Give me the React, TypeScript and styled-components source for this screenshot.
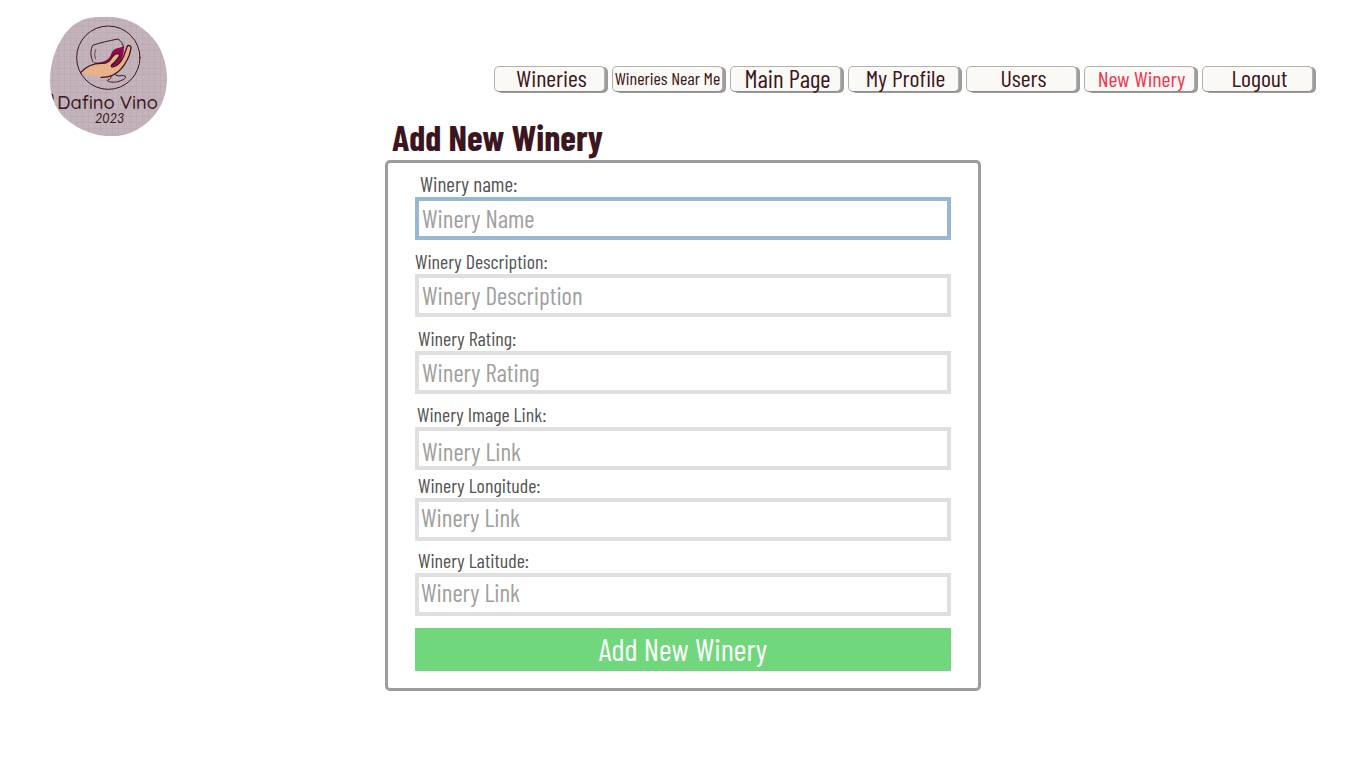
import React from "react";
import styled, { createGlobalStyle } from "styled-components";

const GlobalStyle = createGlobalStyle`
  *, *::before, *::after { box-sizing: border-box; }
  body {
    margin: 0;
    background: #ffffff;
    color: #3b1620;
    font-family: "Barlow Condensed", "Liberation Sans Narrow", "Roboto Condensed", "Liberation Sans", sans-serif;
  }
`;

const Page = styled.div`
  display: grid;
  grid-template-columns: auto 1fr;
  row-gap: 28px;
  padding: 16px 50px;
`;

const LogoLink = styled.a`
  grid-column: 1;
  grid-row: 1 / span 2;
  align-self: start;
  display: block;
  line-height: 0;
`;

const Nav = styled.nav`
  grid-column: 2;
  grid-row: 1;
  display: flex;
  justify-content: flex-end;
  gap: 7px;
  padding: 50px 3px 0 0;
`;

const NavButton = styled.button<{ $size: number; $active?: boolean }>`
  width: 111px;
  height: 26px;
  padding: ${(p) => (p.$size > 18 ? "0 0 2px 4px" : "0 0 2px")};
  border: 1px solid #b0b0b0;
  border-bottom-color: #8c8c8c;
  border-radius: 5px;
  background: #faf9f5;
  box-shadow: 3px 1px 0 #9c9c9c;
  color: ${(p) => (p.$active ? "#f5334f" : "#3b1620")};
  font-family: inherit;
  font-size: ${(p) => p.$size}px;
  line-height: 22px;
  white-space: nowrap;
  cursor: pointer;
`;

const Main = styled.main`
  grid-column: 1 / -1;
  grid-row: 2;
  justify-self: center;
  width: 100%;
  max-width: 596px;
`;

const Title = styled.h1`
  margin: 0;
  padding: 0 0 6px 7px;
  font-size: 36px;
  font-weight: 700;
  line-height: 34px;
`;

const Form = styled.form`
  padding: 8px 27px 17px;
  border: 3px solid #9c9c9c;
  border-radius: 5px;
`;

const Field = styled.div<{ $gap: number }>`
  display: flex;
  flex-direction: column;
  margin-bottom: ${(p) => p.$gap}px;
`;

const Label = styled.label<{ $size: number; $indent: number }>`
  padding-left: ${(p) => p.$indent}px;
  color: #545454;
  font-size: ${(p) => p.$size}px;
  line-height: 26px;
`;

type HintPosition = "high" | "middle" | "low";

const hintPadding: Record<HintPosition, string> = {
  high: "0 2px 6px",
  middle: "0 3px 2px",
  low: "4px 3px 0",
};

const Input = styled.input<{ $hintAt: HintPosition }>`
  width: 100%;
  height: 43px;
  padding: ${(p) => hintPadding[p.$hintAt]};
  border: 4px solid #dfdfdf;
  border-radius: 0;
  outline: none;
  background: #ffffff;
  color: #545454;
  font-family: inherit;
  font-size: 25px;
  &::placeholder { color: #a0a0a0; opacity: 1; }
  &:focus { border-color: #96b8d3; }
`;

const Submit = styled.button`
  display: block;
  width: 100%;
  height: 43px;
  padding: 0 0 2px;
  border: 0;
  background: #71d77c;
  color: #ffffff;
  font-family: inherit;
  font-size: 31px;
  line-height: 41px;
  cursor: pointer;
`;

const navItems = [
  { text: "Wineries", size: 24 },
  { text: "Wineries Near Me", size: 18 },
  { text: "Main Page", size: 25 },
  { text: "My Profile", size: 24 },
  { text: "Users", size: 24 },
  { text: "New Winery", size: 22, active: true },
  { text: "Logout", size: 24 },
];

interface FieldSpec {
  id: string;
  label: string;
  hint: string;
  size: number;
  indent: number;
  gap: number;
  hintAt: HintPosition;
}

const fields: FieldSpec[] = [
  { id: "name", label: "Winery name:", hint: "Winery Name", size: 21, indent: 5, gap: 8, hintAt: "middle" },
  { id: "description", label: "Winery Description:", hint: "Winery Description", size: 20, indent: 0, gap: 8, hintAt: "middle" },
  { id: "rating", label: "Winery Rating:", hint: "Winery Rating", size: 20, indent: 3, gap: 7, hintAt: "middle" },
  { id: "image", label: "Winery Image Link:", hint: "Winery Link", size: 20, indent: 2, gap: 2, hintAt: "low" },
  { id: "longitude", label: "Winery Longitude:", hint: "Winery Link", size: 20, indent: 3, gap: 6, hintAt: "high" },
  { id: "latitude", label: "Winery Latitude:", hint: "Winery Link", size: 20, indent: 3, gap: 12, hintAt: "high" },
];

function Logo() {
  const ink = "#3b1620";
  return (
    <svg width="117" height="121" viewBox="30 24 351 363" role="img" aria-label="Dafino Vino 2023">
      <defs>
        <pattern id="weave" width="18" height="18" patternUnits="userSpaceOnUse">
          <rect width="18" height="18" fill="#c3b3bb" />
          <path d="M0 1.5H18M1.5 0V18" stroke="#b9a9b3" strokeWidth="2" />
        </pattern>
        <clipPath id="blob">
          <path d="M150 29C180 26 215 25 240 31C290 40 335 76 358 118C374 150 381 180 381 215C380 258 366 300 333 333C300 366 262 384 218 385C160 385 105 360 70 326C42 296 30 258 30 215C31 168 45 120 72 82C92 53 118 35 150 29Z" />
        </clipPath>
      </defs>
      <g clipPath="url(#blob)">
        <rect x="30" y="24" width="351" height="363" fill="url(#weave)" />
        <path d="M31 259C38 256 41 266 37 279" fill="none" stroke={ink} strokeWidth="4" />
      </g>
      <g fill="none" stroke={ink} strokeWidth="4" strokeLinecap="round" strokeLinejoin="round">
        <circle cx="205" cy="149" r="95" strokeWidth="3" />
        <path d="M150 158C165 168 188 163 201 155C216 145 211 133 222 125C231 119 241 121 250 115C255 132 246 158 234 170L205 181L170 169Z" fill="#99064f" stroke="none" />
        <path d="M158 160C150 143 152 124 158 112C182 103 210 98 234 93C243 98 249 107 251 119" strokeWidth="3" />
        <path d="M167 125C163 135 163 145 167 153" strokeWidth="2" />
        <path d="M122 194C137 176 158 166 184 166C201 167 208 160 216 148C222 138 234 134 238 139C241 145 232 152 226 160C220 169 212 170 214 175C222 180 237 169 244 158C253 145 256 130 261 117C263 110 274 112 273 120C270 142 258 166 242 184C228 199 206 209 183 208C163 201 144 202 122 194Z" fill="#e8b08b" stroke="none" />
        <path d="M122 194C137 176 158 166 184 166C201 167 208 160 216 148C222 138 234 134 238 139C241 145 232 152 226 160C220 169 212 170 214 175C222 180 237 169 244 158C253 145 256 130 261 117C263 110 274 112 273 120C270 142 258 166 242 184C228 199 206 209 183 208" />
        <path d="M213 204C214 210 211 214 204 216C197 220 214 224 230 222C246 218 262 210 256 205C249 199 237 207 228 202C226 200 226 197 229 195" strokeWidth="3" />
      </g>
      <text x="52" y="302" fontFamily="Quicksand, Lato, sans-serif" fontWeight="500" fontSize="55" fill={ink}>Dafino Vino</text>
      <text x="165" y="345" fontFamily="Lato, sans-serif" fontStyle="italic" fontSize="38" fill={ink}>2023</text>
    </svg>
  );
}

export default function App() {
  return (
    <>
      <GlobalStyle />
      <Page>
        <LogoLink href="#">
          <Logo />
        </LogoLink>
        <Nav>
          {navItems.map((item) => (
            <NavButton key={item.text} type="button" $size={item.size} $active={item.active}>
              {item.text}
            </NavButton>
          ))}
        </Nav>
        <Main>
          <Title>Add New Winery</Title>
          <Form onSubmit={(e) => e.preventDefault()}>
            {fields.map((f, i) => (
              <Field key={f.id} $gap={f.gap}>
                <Label htmlFor={f.id} $size={f.size} $indent={f.indent}>{f.label}</Label>
                <Input id={f.id} type="text" placeholder={f.hint} $hintAt={f.hintAt} autoFocus={i === 0} />
              </Field>
            ))}
            <Submit type="submit">Add New Winery</Submit>
          </Form>
        </Main>
      </Page>
    </>
  );
}
